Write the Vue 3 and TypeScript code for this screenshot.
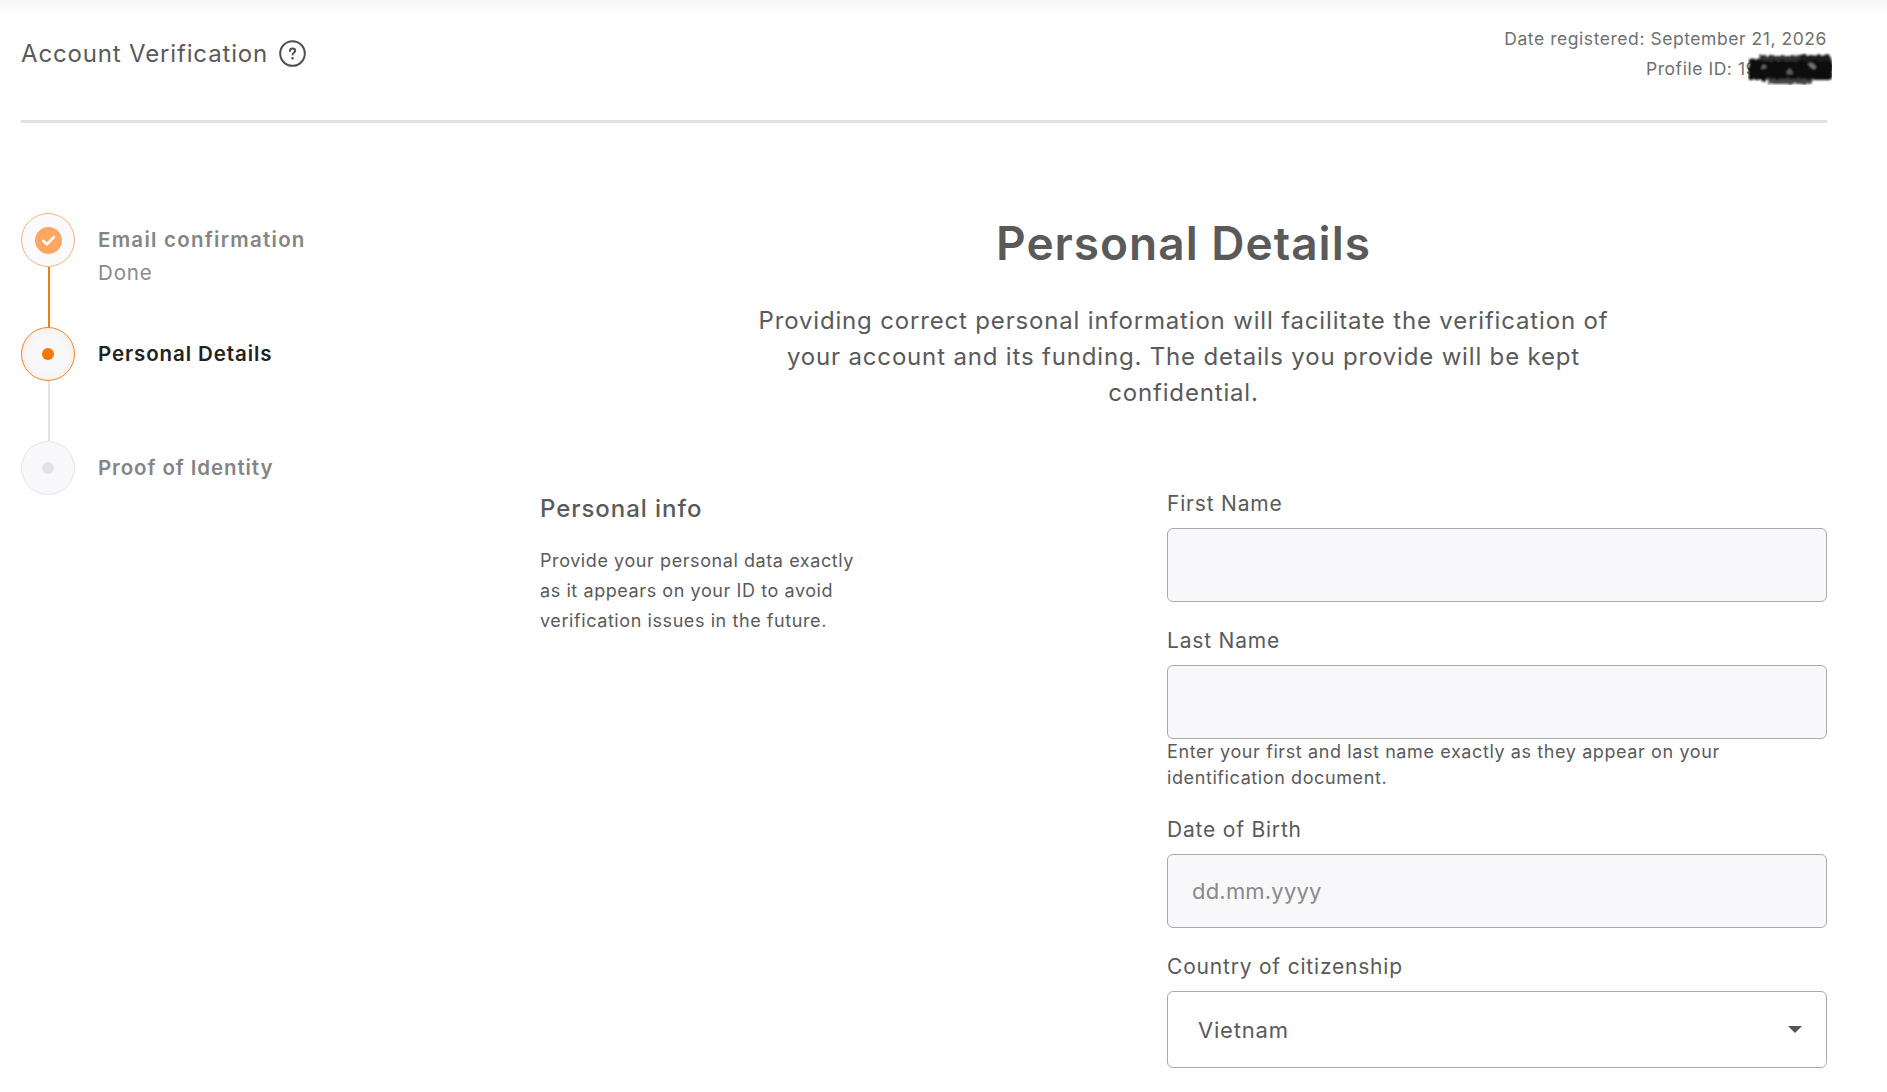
<script setup lang="ts">
interface Step { name: string; note?: string; state: 'done' | 'active' | 'todo' }
const steps: Step[] = [
  { name: 'Email confirmation', note: 'Done', state: 'done' },
  { name: 'Personal Details', state: 'active' },
  { name: 'Proof of Identity', state: 'todo' },
]
</script>

<template>
  <div class="page">
    <div class="topshade"></div>
    <div class="content">
      <header class="header">
        <div class="title">
          <span>Account Verification</span>
          <svg class="help" viewBox="0 0 27 27" width="27" height="27" fill="none">
            <circle cx="13.5" cy="13.5" r="12.3" stroke="#4f4f4f" stroke-width="2" />
            <path d="M10.9 11c.1-1.6 1.2-2.5 2.7-2.5 1.5 0 2.6.9 2.6 2.2 0 2-2.6 2-2.6 3.9" stroke="#4f4f4f" stroke-width="1.9" stroke-linecap="round" />
            <circle cx="13.6" cy="18.2" r="1.2" fill="#4f4f4f" />
          </svg>
        </div>
        <div class="meta">
          <div>Date registered: September 21, 2026</div>
          <div class="profile">Profile ID: 19
            <svg class="blot" viewBox="0 0 84 32" width="84" height="32">
              <defs>
                <filter id="smudge" x="-10%" y="-20%" width="120%" height="140%">
                  <feTurbulence type="fractalNoise" baseFrequency="0.22" numOctaves="2" seed="4" result="n" />
                  <feDisplacementMap in="SourceGraphic" in2="n" scale="6" />
                  <feGaussianBlur stdDeviation="1" />
                </filter>
              </defs>
              <g filter="url(#smudge)">
                <rect x="1" y="6" width="83" height="21" fill="#0b0b0b" />
                <rect x="12" y="2" width="40" height="6" fill="#333" />
                <rect x="52" y="2" width="30" height="6" fill="#1a1a1a" />
                <rect x="20" y="26" width="46" height="5" fill="#444" />
                <rect x="14" y="13" width="4" height="3" fill="#777" />
                <rect x="38" y="17" width="6" height="3" fill="#666" />
                <rect x="62" y="11" width="5" height="3" fill="#777" />
              </g>
            </svg>
          </div>
        </div>
      </header>

      <div class="body">
        <aside class="steps">
          <div v-for="(s, i) in steps" :key="s.name" class="step" :class="s.state">
            <div class="rail">
              <div class="circle">
                <span v-if="s.state === 'done'" class="badge">
                  <svg viewBox="0 0 27 27" width="27" height="27" fill="none">
                    <path d="M8.2 13.8l3.7 3.6 7-7.2" stroke="#fff" stroke-width="2.6" stroke-linecap="round" stroke-linejoin="round" />
                  </svg>
                </span>
                <span v-else class="dot"></span>
              </div>
              <div v-if="i < steps.length - 1" class="line"></div>
            </div>
            <div class="label">
              <div class="name">{{ s.name }}</div>
              <div v-if="s.note" class="note">{{ s.note }}</div>
            </div>
          </div>
        </aside>

        <main class="main">
          <h1>Personal Details</h1>
          <p class="lead">Providing correct personal information will facilitate the verification of your account and its funding. The details you provide will be kept confidential.</p>

          <section class="section">
            <div class="intro">
              <h2>Personal info</h2>
              <p>Provide your personal data exactly<br />as it appears on your ID to avoid<br />verification issues in the future.</p>
            </div>
            <form class="form" @submit.prevent>
              <label class="field">
                <span class="flabel">First Name</span>
                <input class="input" type="text" />
              </label>
              <label class="field">
                <span class="flabel">Last Name</span>
                <input class="input" type="text" />
                <span class="hint">Enter your first and last name exactly as they appear on your identification document.</span>
              </label>
              <label class="field">
                <span class="flabel">Date of Birth</span>
                <input class="input" type="text" placeholder="dd.mm.yyyy" />
              </label>
              <div class="field">
                <span class="flabel">Country of citizenship</span>
                <div class="select">
                  <span>Vietnam</span>
                  <span class="caret"></span>
                </div>
              </div>
            </form>
          </section>
        </main>
      </div>
    </div>
  </div>
</template>

<style>
html, body { margin: 0; background: #fff; }
</style>

<style scoped>
.page {
  position: relative;
  height: 1092px;
  overflow: hidden;
  background: #fff;
  color: #5a5a5a;
  font-family: Inter, "Noto Sans", sans-serif;
}
.topshade {
  position: absolute;
  inset: 0 0 auto 0;
  height: 14px;
  background: linear-gradient(#f5f5f5, #ffffff);
}
.content { padding: 0 60px 0 21px; }
.header {
  position: relative;
  height: 120px;
  border-bottom: 3px solid #e0e0e0;
  display: flex;
  justify-content: space-between;
  align-items: flex-start;
}
.title {
  display: flex;
  align-items: center;
  gap: 11px;
  margin-top: 40px;
  height: 27px;
  font-size: 24px;
  line-height: 27px;
  letter-spacing: 0.84px;
  color: #5a5a5a;
}
.help { flex: none; }
.meta {
  margin-top: 24px;
  text-align: right;
  font-size: 17.5px;
  line-height: 30px;
  letter-spacing: 0.55px;
  color: #707070;
}
.profile { position: relative; padding-right: 70px; }
.blot { position: absolute; right: -5px; top: -1px; }

.body { display: flex; }
.steps { width: 519px; flex: none; padding-top: 90px; }
.step { display: flex; gap: 23px; }
.rail { width: 54px; flex: none; display: flex; flex-direction: column; align-items: center; }
.circle {
  box-sizing: border-box;
  width: 54px;
  height: 54px;
  border-radius: 50%;
  border: 1.5px solid #e6e6e8;
  background: #f8f8fa;
  display: flex;
  align-items: center;
  justify-content: center;
}
.line { width: 2px; height: 60px; margin-left: 2px; background: #e2e2e2; }
.done .circle { border-color: #f9b27a; background: #fafafc; }
.done .line { background: #f57c14; }
.active .circle { border-color: #f58220; box-shadow: inset 0 0 8px rgba(245, 130, 32, 0.12); }
.badge { width: 27px; height: 27px; border-radius: 50%; background: #ffa660; display: block; }
.badge svg { display: block; }
.dot { width: 12px; height: 12px; border-radius: 50%; background: #e2e2e4; }
.active .dot { background: #f57700; }
.label { padding-top: 15px; }
.name { font-size: 20.5px; line-height: 24px; font-weight: 600; letter-spacing: 0.9px; color: #858585; }
.done .name { letter-spacing: 1.25px; }
.active .name { color: #222; }
.note { margin-top: 9px; font-size: 20.5px; line-height: 24px; letter-spacing: 0.85px; color: #8a8a8a; }

.main { flex: 1; min-width: 0; padding-top: 93px; }
h1 {
  margin: 0;
  text-align: center;
  font-size: 46px;
  line-height: 54px;
  font-weight: 600;
  letter-spacing: 1px;
  color: #5a5a5a;
}
.lead {
  width: 870px;
  margin: 33px auto 0;
  text-align: center;
  font-size: 24px;
  line-height: 36px;
  letter-spacing: 0.83px;
  color: #5a5a5a;
}
.section { display: flex; margin-top: 81px; }
.intro { width: 627px; flex: none; padding-top: 2px; }
h2 { margin: 0; font-size: 24px; line-height: 30px; font-weight: 500; letter-spacing: 0.95px; color: #5a5a5a; }
.intro p { margin: 22px 0 0; font-size: 18px; line-height: 30px; letter-spacing: 0.58px; color: #5a5a5a; }
.form { flex: 1; display: flex; flex-direction: column; gap: 27px; }
.field { display: block; }
.flabel { display: block; font-size: 21px; line-height: 24px; letter-spacing: 0.8px; color: #5a5a5a; margin-bottom: 12px; }
.input {
  display: block;
  box-sizing: border-box;
  width: 100%;
  height: 74px;
  padding: 0 24px;
  border: 1.5px solid #aaa;
  border-radius: 6px;
  background: #f8f8fa;
  font: inherit;
  font-size: 22px;
  letter-spacing: 0.2px;
  color: #5a5a5a;
  outline: none;
}
.input::placeholder { color: #8a8a8a; opacity: 1; }
.hint { display: block; font-size: 18px; line-height: 26px; letter-spacing: 0.6px; color: #5a5a5a; }
.select {
  box-sizing: border-box;
  height: 77px;
  padding: 0 24px 0 30px;
  border: 1.5px solid #aaa;
  border-radius: 6px;
  background: #fff;
  display: flex;
  align-items: center;
  justify-content: space-between;
  font-size: 22px;
  letter-spacing: 0.8px;
  color: #5a5a5a;
}
.caret {
  width: 0;
  height: 0;
  border-left: 7px solid transparent;
  border-right: 7px solid transparent;
  border-top: 7px solid #555;
}
</style>
